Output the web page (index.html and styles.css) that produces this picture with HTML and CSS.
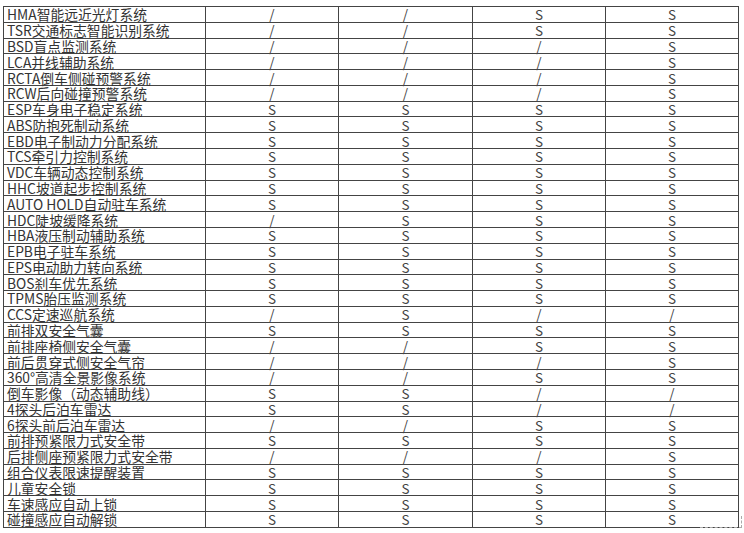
FILE: index.html
```html
<!DOCTYPE html>
<html lang="zh">
<head>
<meta charset="utf-8">
<link rel="stylesheet" href="styles.css">
</head>
<body>
<div class="page">
  <div class="grid" id="grid"></div>
  <div class="mark"></div>
</div>
<script>
var rows = [
["HMA智能远近光灯系统","/","/","S","S"],
["TSR交通标志智能识别系统","/","/","S","S"],
["BSD盲点监测系统","/","/","/","S"],
["LCA并线辅助系统","/","/","/","S"],
["RCTA倒车侧碰预警系统","/","/","/","S"],
["RCW后向碰撞预警系统","/","/","/","S"],
["ESP车身电子稳定系统","S","S","S","S"],
["ABS防抱死制动系统","S","S","S","S"],
["EBD电子制动力分配系统","S","S","S","S"],
["TCS牵引力控制系统","S","S","S","S"],
["VDC车辆动态控制系统","S","S","S","S"],
["HHC坡道起步控制系统","S","S","S","S"],
["AUTO HOLD自动驻车系统","S","S","S","S"],
["HDC陡坡缓降系统","/","S","S","S"],
["HBA液压制动辅助系统","S","S","S","S"],
["EPB电子驻车系统","S","S","S","S"],
["EPS电动助力转向系统","S","S","S","S"],
["BOS刹车优先系统","S","S","S","S"],
["TPMS胎压监测系统","S","S","S","S"],
["CCS定速巡航系统","/","S","/","/"],
["前排双安全气囊","S","S","S","S"],
["前排座椅侧安全气囊","/","/","S","S"],
["前后贯穿式侧安全气帘","/","/","/","S"],
["360°高清全景影像系统","/","/","S","S"],
["倒车影像（动态辅助线）","S","S","/","/"],
["4探头后泊车雷达","S","S","/","/"],
["6探头前后泊车雷达","/","/","S","S"],
["前排预紧限力式安全带","S","S","S","S"],
["后排侧座预紧限力式安全带","/","/","/","S"],
["组合仪表限速提醒装置","S","S","S","S"],
["儿童安全锁","S","S","S","S"],
["车速感应自动上锁","S","S","S","S"],
["碰撞感应自动解锁","S","S","S","S"]
];
var g = document.getElementById("grid");
rows.forEach(function (r) {
  r.forEach(function (v, i) {
    var c = document.createElement("div");
    c.className = i === 0 ? "cell label" : "cell val";
    var s = document.createElement("span");
    s.textContent = v;
    c.appendChild(s);
    g.appendChild(c);
  });
});
</script>
</body>
</html>
```
FILE: styles.css
```css
html, body {
  margin: 0;
  padding: 0;
  background: #fff;
}
.page {
  position: relative;
  width: 744px;
  height: 533px;
  overflow: hidden;
  padding: 6px 0 0 3px;
  box-sizing: border-box;
}
.grid {
  display: grid;
  grid-template-columns: 202px 133px 134px 133px 133px;
  grid-template-rows: repeat(33, 15.79px);
  width: 736px;
  border-left: 1px solid #444;
  border-top: 1px solid #444;
  box-sizing: border-box;
  font-family: "Noto Sans CJK SC", "Noto Sans", sans-serif;
  font-weight: 400;
  font-size: 13.8px;
  color: #333;
}
.cell {
  border-right: 1px solid #444;
  border-bottom: 1px solid #444;
  box-sizing: border-box;
  display: flex;
  align-items: center;
  white-space: nowrap;
}
.cell span {
  line-height: 14px;
  display: block;
}
.label {
  padding-left: 3px;
}
.val {
  justify-content: center;
  font-size: 13.5px;
  color: #444;
}
.mark {
  position: absolute;
  left: 700px;
  top: 516px;
  width: 41px;
  height: 11px;
  border-right: 1px dashed #aaa;
  border-bottom: 1px dashed #aaa;
}
```
